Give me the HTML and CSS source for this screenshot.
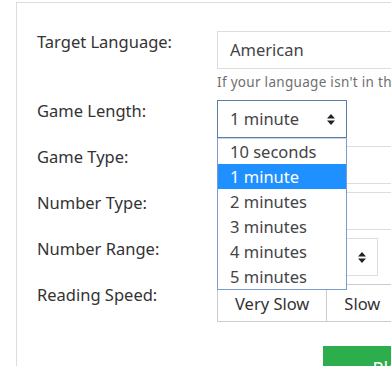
FILE: index.html
```html
<!DOCTYPE html>
<html>
<head>
  <title>Number Listening Game</title>
  <link rel="stylesheet" href="styles.css">
</head>
<body>
  <div class="page">
    <div class="card">
      <form class="settings">
        <div class="row">
          <label>Target Language:</label>
          <div class="field">
            <div class="control">American</div>
            <small class="help">If your language isn't in the list, please let us know.</small>
          </div>
        </div>

        <div class="row">
          <label>Game Length:</label>
          <div class="field">
            <div class="select-wrap">
              <div class="control select short focused">1 minute
                <svg class="arrow" width="8" height="11" viewBox="0 0 8 11"><path d="M4 0 L8 4.5 L0 4.5 Z M0 6.5 L8 6.5 L4 11 Z" fill="#222"/></svg>
              </div>
              <!-- lista abierta del select -->
              <ul class="dropdown">
                <li>10 seconds</li>
                <li class="active">1 minute</li>
                <li>2 minutes</li>
                <li>3 minutes</li>
                <li>4 minutes</li>
                <li>5 minutes</li>
              </ul>
            </div>
          </div>
        </div>

        <div class="row">
          <label>Game Type:</label>
          <div class="field">
            <div class="control select">Listening</div>
          </div>
        </div>

        <div class="row">
          <label>Number Type:</label>
          <div class="field">
            <div class="control select">Integers</div>
          </div>
        </div>

        <div class="row">
          <label>Number Range:</label>
          <div class="field">
            <div class="control select range">0 - 100
              <svg class="arrow" width="8" height="11" viewBox="0 0 8 11"><path d="M4 0 L8 4.5 L0 4.5 Z M0 6.5 L8 6.5 L4 11 Z" fill="#222"/></svg>
            </div>
          </div>
        </div>

        <div class="row">
          <label>Reading Speed:</label>
          <div class="btn-group">
            <button type="button">Very Slow</button>
            <button type="button">Slow</button>
            <button type="button">Normal</button>
            <button type="button">Fast</button>
          </div>
        </div>

        <div class="actions">
          <button type="button" class="play">&#9679; Play</button>
        </div>
      </form>
    </div>
  </div>
</body>
</html>
```

FILE: styles.css
```css
/* Cuerpo de la página */
body {
  font-family: "Noto Sans", "Liberation Sans", sans-serif;
  margin: 0;
  padding: 0;
  background-color: #fff;
  color: #333;
  overflow: hidden;
}

.page {
  padding: 2px 0 0 16px;
}

/* Tarjeta del formulario */
.card {
  border-left: 1px solid #ddd;
  border-top: 1px solid #ddd;
  padding: 28px 0 40px 20px;
  width: 600px;
}

.settings {
  margin: 0;
}

/* Filas etiqueta + control */
.row {
  display: grid;
  grid-template-columns: 180px 1fr;
  align-items: start;
  margin-bottom: 8px;
}

.row label {
  font-size: 16.5px;
  line-height: 22px;
}

.field {
  min-width: 0;
}

.control {
  box-sizing: border-box;
  height: 38px;
  border: 1px solid #ddd;
  padding: 0 12px;
  font-size: 16.5px;
  line-height: 36px;
  color: #444;
  white-space: nowrap;
}

.select {
  position: relative;
}

.select .arrow {
  position: absolute;
  right: 11px;
  top: 13px;
}

.short {
  width: 130px;
}

.range {
  width: 161px;
}

.focused {
  border-color: #5a7fa8;
}

.help {
  display: block;
  margin-top: 3px;
  font-size: 13.5px;
  letter-spacing: 0.3px;
  line-height: 20px;
  color: #6f6f6f;
  white-space: nowrap;
}

/* Lista desplegada */
.select-wrap {
  position: relative;
}

.dropdown {
  position: absolute;
  top: 38px;
  left: 0;
  z-index: 5;
  box-sizing: border-box;
  width: 130px;
  margin: 0;
  padding: 0;
  list-style: none;
  background-color: #fff;
  border: 1px solid #7a9bd0;
  border-top-color: #c8d4e6;
}

.dropdown li {
  height: 25px;
  line-height: 25px;
  padding-left: 12px;
  font-size: 16.5px;
  color: #444;
  white-space: nowrap;
}

.dropdown li.active {
  background-color: #1e90ff;
  color: #fff;
}

/* Grupo de botones */
.btn-group {
  display: flex;
}

.btn-group button {
  height: 38px;
  padding: 0 17px;
  border: 1px solid #ccc;
  margin-left: -1px;
  background-color: #fff;
  font-family: inherit;
  font-size: 16.5px;
  color: #333;
  white-space: nowrap;
}

.btn-group button:first-child {
  margin-left: 0;
}

/* Botón de jugar */
.actions {
  padding: 16px 0 0 286px;
}

.play {
  background-color: #2dae4c;
  color: #fff;
  border: none;
  padding: 10px 30px 14px 34px;
  font-family: inherit;
  font-size: 18px;
  line-height: 24px;
  cursor: pointer;
}
```
